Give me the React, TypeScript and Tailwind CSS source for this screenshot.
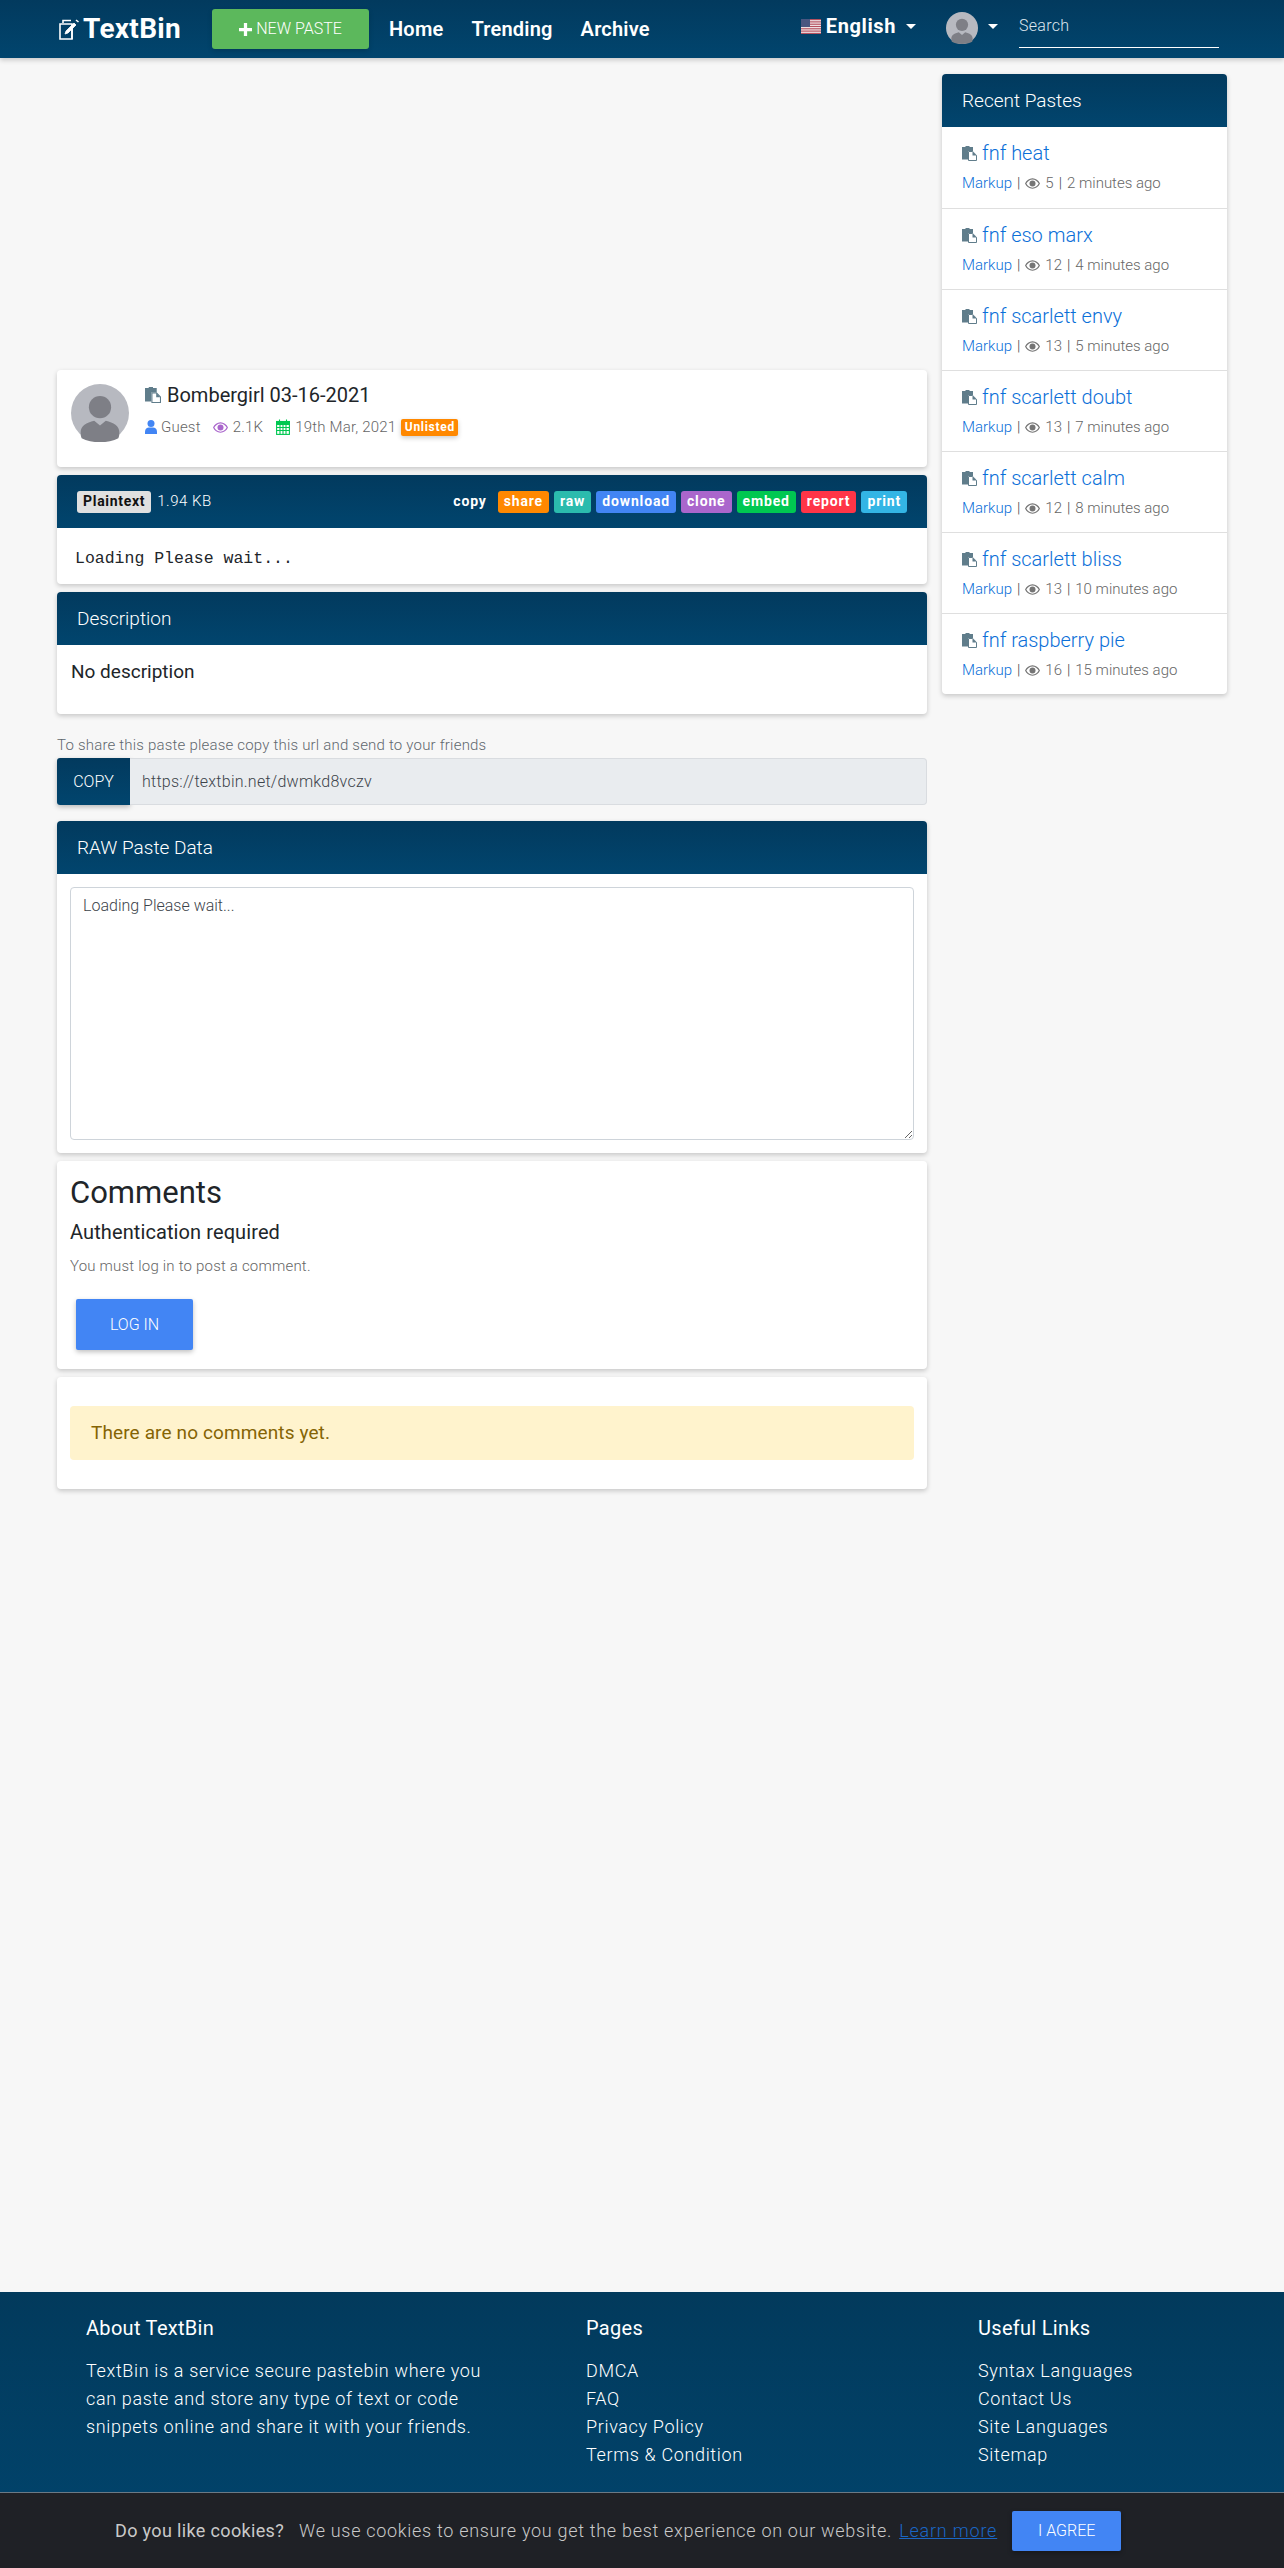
import React from 'react';

const roboto = "font-['Roboto',sans-serif]";

const recentPastes = [
  { title: 'fnf heat', views: 5, ago: '2 minutes ago' },
  { title: 'fnf eso marx', views: 12, ago: '4 minutes ago' },
  { title: 'fnf scarlett envy', views: 13, ago: '5 minutes ago' },
  { title: 'fnf scarlett doubt', views: 13, ago: '7 minutes ago' },
  { title: 'fnf scarlett calm', views: 12, ago: '8 minutes ago' },
  { title: 'fnf scarlett bliss', views: 13, ago: '10 minutes ago' },
  { title: 'fnf raspberry pie', views: 16, ago: '15 minutes ago' },
];

const pasteActions = [
  { label: 'share', color: 'bg-[#ff8800]' },
  { label: 'raw', color: 'bg-[#2bbbad]' },
  { label: 'download', color: 'bg-[#4285f4]' },
  { label: 'clone', color: 'bg-[#aa66cc]' },
  { label: 'embed', color: 'bg-[#00c851]' },
  { label: 'report', color: 'bg-[#ff3547]' },
  { label: 'print', color: 'bg-[#33b5e5]' },
];

function PasteIcon({ className = '' }: { className?: string }) {
  return (
    <svg viewBox="0 0 15 15" className={className}>
      <path fill="#607d8b" d="M0 1h3.500V0h4v1H11v4H6v8.500H0z" />
      <path fill="#fff" stroke="#607d8b" d="M6.500 5.500h4.200l3.800 3.800v5.200h-8z" />
      <path fill="#607d8b" d="M10.500 5.500v4h4z" />
    </svg>
  );
}

function EyeIcon({ color, className = '' }: { color: string; className?: string }) {
  return (
    <svg viewBox="0 0 20 14" className={className}>
      <path fill={color} fillRule="evenodd" d="M10 0C5.600 0 2 2.800 0 7c2 4.200 5.600 7 10 7s8-2.800 10-7c-2-4.200-5.600-7-10-7zm0 1.500c3.500 0 6.400 2.200 8.200 5.500-1.800 3.300-4.700 5.500-8.200 5.500S3.600 10.300 1.800 7C3.600 3.700 6.500 1.500 10 1.500z" />
      <circle cx="10" cy="7" r="4" fill={color} />
    </svg>
  );
}

function Avatar({ className = '' }: { className?: string }) {
  return (
    <svg viewBox="0 0 60 60" className={className}>
      <circle cx="30" cy="30" r="30" fill="#b7b9c0" />
      <circle cx="30" cy="24" r="11.500" fill="#7e7f86" />
      <path d="M11 56c-1-2-1-4-1-6 0-7 6-10 14-12l6 5 6-5c8 2 14 5 14 12 0 2 0 4-1 6-5 3-12 4-19 4s-14-1-19-4z" fill="#7e7f86" />
    </svg>
  );
}

function UsFlag() {
  return (
    <svg viewBox="0 0 20 15" className="w-5 h-[15px]">
      <rect width="20" height="15" fill="#f4f0f0" />
      {[0, 2.3, 4.6, 6.9, 9.2, 11.5, 13.8].map((y) => (
        <rect key={y} y={y} width="20" height="1.2" fill="#b5515f" />
      ))}
      <rect width="9" height="8" fill="#4a5680" />
    </svg>
  );
}

function Caret({ className = '' }: { className?: string }) {
  return <span className={`inline-block border-x-[5.5px] border-t-[5.5px] border-x-transparent border-t-white ${className}`} />;
}

function NavBar() {
  return (
    <nav className="h-[58px] shrink-0 flex items-center bg-gradient-to-b from-[#023a5e] to-[#01456e] shadow-[0_2px_5px_rgba(0,0,0,0.2)] pl-[59px] pr-[65px] text-white">
      <div className="flex items-center w-[153px]">
        <svg viewBox="0 0 21 21" className="w-[21px] h-[21px] mr-[3px]" fill="none" stroke="white" strokeWidth="1.6">
          <path d="M4 4V1.500h8" />
          <path d="M1 5h12v15H1z" />
          <path d="M13 9v11" />
          <path d="M6 15l1-3 8-8 2 2-8 8z" fill="white" strokeWidth="0.8" />
          <path d="M17 1l2.500 2" />
        </svg>
        <span className="text-[28px] leading-none font-bold tracking-[0.3px]">TextBin</span>
      </div>
      <button className="w-[157px] h-10 rounded-[3px] bg-[#5cb85c] shadow-[0_2px_5px_rgba(0,0,0,0.16)] flex items-center justify-center gap-[4px] text-[16px] font-light">
        <svg viewBox="0 0 12 12" className="w-[13px] h-[13px]" fill="white">
          <path d="M4.500 0h3v4.500H12v3H7.500V12h-3V7.500H0v-3h4.500z" />
        </svg>
        <span>NEW PASTE</span>
      </button>
      <div className="flex items-center gap-[28px] ml-5 text-[20px] font-semibold tracking-[0.2px]">
        <span>Home</span>
        <span>Trending</span>
        <span>Archive</span>
      </div>
      <div className="ml-auto flex items-center h-full">
        <div className="flex items-center mb-[6px]">
          <UsFlag />
          <span className="ml-[5px] text-[20px] font-bold tracking-[0.6px]">English</span>
          <Caret className="ml-[10px]" />
        </div>
        <Avatar className="w-8 h-8 ml-[30px] mb-[2px]" />
        <Caret className="ml-[10px] mb-[6px]" />
        <div className="ml-[21px] w-[200px] h-[38px] mb-[1px] pb-[4px] border-b border-white flex items-center text-[16px] font-light text-[#dde6ee] tracking-[0.3px]">Search</div>
      </div>
    </nav>
  );
}

function CardHeader({ children }: { children: React.ReactNode }) {
  return (
    <div className="h-[53px] flex items-center px-5 rounded-t-[4px] bg-gradient-to-b from-[#023a5e] to-[#01456e] text-white text-[19px] font-light leading-none">
      {children}
    </div>
  );
}

const cardClass = 'bg-white rounded-[4px] shadow-[0_2px_5px_rgba(0,0,0,0.2)]';

function PasteHeader() {
  return (
    <div className={`${cardClass} h-[97px] flex pl-[14px] pt-[14px]`}>
      <Avatar className="w-[58px] h-[58px]" />
      <div className="ml-4">
        <div className="flex items-center h-[24px] mt-[-1px]">
          <PasteIcon className="w-4 h-4 mr-[6px]" />
          <span className="text-[20px] text-[#212529]">Bombergirl 03-16-2021</span>
        </div>
        <div className="flex items-center mt-[9px] text-[15px] text-[#666] font-light tracking-[0.2px]">
          <svg viewBox="0 0 12 14" className="w-3 h-[14px] mr-1" fill="#4285f4">
            <circle cx="6" cy="3.5" r="3.5" />
            <path d="M0 14v-2.500C0 9 2 7.500 4 7.500h4c2 0 4 1.500 4 4V14z" />
          </svg>
          <span>Guest</span>
          <EyeIcon color="#aa66cc" className="w-[15px] h-[11px] ml-[12px] mr-[5px]" />
          <span>2.1K</span>
          <svg viewBox="0 0 14 16" className="w-[14px] h-4 ml-[13px] mr-[5px]" fill="none" stroke="#00c851" strokeWidth="1.1">
            <rect x="0.6" y="2.5" width="12.800" height="12.900" />
            <path d="M0.600 5.500h12.800V2.500H0.600z" fill="#00c851" />
            <path d="M0.600 8.500h12.800M0.600 11.500h12.800M4 5.500v10M7 5.500v10M10 5.500v10M3.500 0.500v3M10.500 0.500v3" />
          </svg>
          <span>19th Mar, 2021</span>
          <span className="ml-[5px] h-[17px] w-[57px] justify-center flex items-center rounded-[2px] bg-[#ff8800] text-white text-[12px] font-bold tracking-[0.7px] shadow-[0_2px_5px_rgba(0,0,0,0.2)]">Unlisted</span>
        </div>
      </div>
    </div>
  );
}

function PasteContent() {
  return (
    <div className={cardClass}>
      <div className="h-[53px] flex items-center px-5 rounded-t-[4px] bg-gradient-to-b from-[#023a5e] to-[#01456e] text-white">
        <span className="h-[22px] px-[6px] flex items-center rounded-[3px] bg-[#e0e0e0] text-[#111] text-[14px] font-bold tracking-[0.7px]">Plaintext</span>
        <span className="ml-[6px] text-[15px] font-light tracking-[0.5px]">1.94 KB</span>
        <div className="ml-auto flex items-center gap-[5px] text-[14px] font-bold tracking-[0.85px]">
          <span className="h-[22px] px-[6px] flex items-center rounded-[3px]">copy</span>
          {pasteActions.map((action) => (
            <span key={action.label} className={`h-[22px] px-[6px] flex items-center rounded-[3px] ${action.color}`}>{action.label}</span>
          ))}
        </div>
      </div>
      <div className="h-[56px] flex items-center pt-[6px] px-[18px] text-[16.5px] text-[#212529] font-['Liberation_Mono',monospace]">Loading Please wait...</div>
    </div>
  );
}

function ShareBox() {
  return (
    <div className="mt-[21px]">
      <div className="h-[20px] flex items-center text-[15px] font-light text-[#5f676e] tracking-[0.2px]">To share this paste please copy this url and send to your friends</div>
      <div className="flex h-[47px] mt-[3px]">
        <span className="w-[73px] flex items-center justify-center rounded-l-[3px] bg-gradient-to-b from-[#023a5e] to-[#01456e] text-white text-[16px] font-light shadow-[0_2px_5px_rgba(0,0,0,0.25)]">COPY</span>
        <div className="flex-1 flex items-center pl-[12px] rounded-r-[4px] bg-[#e9ecef] border border-[#d9dce0] border-l-0 text-[16px] text-[#3c434a] font-light tracking-[0.25px]">https://textbin.net/dwmkd8vczv</div>
      </div>
    </div>
  );
}

function Sidebar() {
  return (
    <aside className={`${cardClass} w-[285px] h-fit`}>
      <CardHeader>Recent Pastes</CardHeader>
      {recentPastes.map((paste, i) => (
        <div key={paste.title} className={`h-[81px] pl-5 pt-[14px] ${i > 0 ? 'border-t border-[#dfdfdf]' : ''}`}>
          <div className="flex items-center h-[24px]">
            <PasteIcon className="w-[15px] h-[15px] mr-[5px]" />
            <span className="text-[20px] font-light text-[#0b6fd8]">{paste.title}</span>
          </div>
          <div className="flex items-center mt-[7px] text-[15px] font-light text-[#666]">
            <span className="text-[#0b6fd8]">Markup</span>
            <span className="mx-[5px] text-[#444]">|</span>
            <EyeIcon color="#757575" className="w-[15px] h-[11px] mr-[5px]" />
            <span>{paste.views}</span>
            <span className="mx-[5px] text-[#444]">|</span>
            <span>{paste.ago}</span>
          </div>
        </div>
      ))}
    </aside>
  );
}

function Footer() {
  return (
    <footer className="mt-auto h-[276px] shrink-0 bg-gradient-to-b from-[#023a5c] to-[#01456e] text-white font-light text-[18px] leading-[28px] tracking-[0.65px] pt-[22px] flex">
      <div className="ml-[86px] w-[500px]">
        <div className="text-[20px] font-normal tracking-[0.3px]">About TextBin</div>
        <p className="mt-[15px] w-[405px]">TextBin is a service secure pastebin where you can paste and store any type of text or code snippets online and share it with your friends.</p>
      </div>
      <div className="w-[392px]">
        <div className="text-[20px] font-normal tracking-[0.3px]">Pages</div>
        <ul className="mt-[15px]">
          <li>DMCA</li>
          <li>FAQ</li>
          <li>Privacy Policy</li>
          <li>Terms &amp; Condition</li>
        </ul>
      </div>
      <div>
        <div className="text-[20px] font-normal tracking-[0.3px]">Useful Links</div>
        <ul className="mt-[15px]">
          <li>Syntax Languages</li>
          <li>Contact Us</li>
          <li>Site Languages</li>
          <li>Sitemap</li>
        </ul>
      </div>
    </footer>
  );
}

function CookieBar() {
  return (
    <div className="fixed bottom-0 inset-x-0 h-[76px] flex items-center pl-[115px] bg-[#1f2126] border-t border-[#6b7a85] text-[18px] font-light text-[#c9c9c9]">
      <span className="font-normal tracking-[0.35px]">Do you like cookies?</span>
      <span className="ml-[15px] tracking-[0.7px]">We use cookies to ensure you get the best experience on our website.</span>
      <span className="ml-[7px] text-[#1a66c5] underline tracking-[0.8px]">Learn more</span>
      <button className="ml-[15px] w-[109px] h-10 rounded-[2px] bg-[#4285f4] text-white text-[16px] font-light shadow-[0_2px_5px_rgba(0,0,0,0.3)]">I AGREE</button>
    </div>
  );
}

export default function App() {
  return (
    <div className={`${roboto} min-h-[2568px] flex flex-col bg-[#f7f7f7]`}>
      <NavBar />
      <div className="flex items-start gap-[15px] pl-[57px] pt-[16px]">
        <main className="w-[870px] flex flex-col pt-[296px]">
          <PasteHeader />
          <div className="mt-2"><PasteContent /></div>
          <div className={`${cardClass} mt-2`}>
            <CardHeader>Description</CardHeader>
            <div className="h-[69px] pl-[14px] pt-[13px] text-[19px] text-[#212529]">No description</div>
          </div>
          <ShareBox />
          <div className={`${cardClass} mt-4`}>
            <CardHeader>RAW Paste Data</CardHeader>
            <div className="p-[13px]">
              <textarea readOnly value="Loading Please wait..." className="block w-full h-[253px] rounded-[4px] border border-[#ced4da] px-3 py-[6px] text-[16px] font-light text-[#3c434a] outline-none" />
            </div>
          </div>
          <div className={`${cardClass} mt-2 h-[208px] px-[13px] pt-[13px]`}>
            <h2 className="text-[31px] leading-[38px] text-[#212529]">Comments</h2>
            <h5 className="mt-[8px] text-[20px] leading-[24px] text-[#212529] tracking-[0.1px]">Authentication required</h5>
            <p className="mt-[12px] text-[15px] leading-[21px] font-light text-[#666] tracking-[0.2px]">You must log in to post a comment.</p>
            <button className="mt-[22px] ml-[6px] w-[117px] h-[51px] rounded-[2px] bg-[#4285f4] text-white text-[16px] font-light shadow-[0_2px_5px_rgba(0,0,0,0.25)]">LOG IN</button>
          </div>
          <div className={`${cardClass} mt-2 h-[112px] px-[13px] pt-[29px]`}>
            <div className="h-[54px] flex items-center pl-[21px] pt-[1px] rounded-[4px] bg-[#fff3cd] text-[19px] text-[#856404] tracking-[0.12px]">There are no comments yet.</div>
          </div>
        </main>
        <Sidebar />
      </div>
      <Footer />
      <CookieBar />
    </div>
  );
}
